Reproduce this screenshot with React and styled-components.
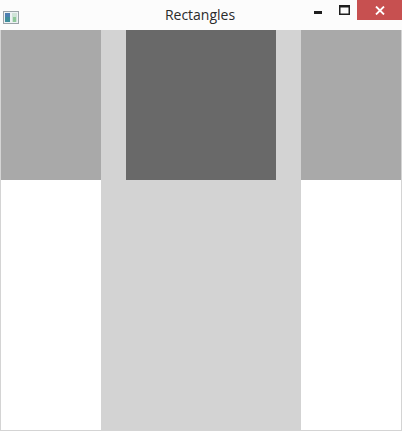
import React from 'react'
import styled, { createGlobalStyle } from 'styled-components'

const GlobalStyle = createGlobalStyle`
  html, body {
    margin: 0;
    padding: 0;
    background: #ffffff;
  }
`

const Window = styled.div`
  width: 402px;
  height: 431px;
  box-sizing: border-box;
  border: 1px solid #d4d4d4;
  border-top: none;
  display: flex;
  flex-direction: column;
  background: #ffffff;
`

const TitleBar = styled.div`
  height: 30px;
  margin: 0 -1px;
  display: flex;
  align-items: flex-start;
  background: #fcfcfc;
  font-family: 'Open Sans', 'Noto Sans', 'Liberation Sans', sans-serif;
`

const AppIcon = styled.div`
  margin: 7px 0 0 3px;
  width: 16px;
  height: 13px;
`

const Title = styled.div`
  flex: 1;
  text-align: center;
  font-size: 14px;
  line-height: 30px;
  color: #2b2b2b;
  padding-left: 76px;
`

const Controls = styled.div`
  display: flex;
  height: 20px;
`

const CtrlButton = styled.div`
  width: ${(p) => p.$w}px;
  height: 20px;
  display: flex;
  align-items: center;
  justify-content: center;
  background: ${(p) => p.$bg || 'transparent'};
`

const Content = styled.div`
  flex: 1;
  display: grid;
  grid-template-columns: 100px 200px 100px;
  grid-template-rows: 150px 250px;
`

const Cell = styled.div`
  background: ${(p) => p.$color};
  grid-column: ${(p) => p.$col};
  grid-row: ${(p) => p.$row || '1'};
  display: flex;
  justify-content: center;
`

const Inner = styled.div`
  width: 150px;
  height: 150px;
  background: #696969;
`

export default function App() {
  return (
    <>
      <GlobalStyle />
      <Window>
        <TitleBar>
          <AppIcon>
            <svg width="16" height="13" viewBox="0 0 16 13">
              <rect x="0.5" y="0.5" width="15" height="12" fill="#eef2f4" stroke="#9aa3a8" />
              <rect x="2" y="2" width="5" height="9" fill="#3f8d9b" />
              <rect x="2" y="2" width="5" height="4" fill="#4d7fb0" />
              <rect x="9" y="2" width="5" height="9" fill="#cfe3d8" />
              <rect x="10" y="6" width="3" height="5" fill="#8fc89a" />
            </svg>
          </AppIcon>
          <Title>Rectangles</Title>
          <Controls>
            <CtrlButton $w={26}>
              <svg width="10" height="10" viewBox="0 0 10 10">
                <rect x="1" y="6" width="8" height="3" fill="#1e1e1e" />
              </svg>
            </CtrlButton>
            <CtrlButton $w={26}>
              <svg width="11" height="10" viewBox="0 0 11 10">
                <rect x="0.75" y="0.75" width="9.5" height="8.5" fill="none" stroke="#1e1e1e" strokeWidth="1.5" />
                <rect x="0" y="0" width="11" height="2.5" fill="#1e1e1e" />
              </svg>
            </CtrlButton>
            <CtrlButton $w={45} $bg="#c75050">
              <svg width="10" height="9" viewBox="0 0 10 9">
                <path d="M1 0.5 L9 8.5 M9 0.5 L1 8.5" stroke="#ffffff" strokeWidth="1.8" />
              </svg>
            </CtrlButton>
          </Controls>
        </TitleBar>
        <Content>
          <Cell $color="#a9a9a9" $col="1" />
          <Cell $color="#d3d3d3" $col="2" $row="1 / span 2">
            <Inner />
          </Cell>
          <Cell $color="#a9a9a9" $col="3" />
        </Content>
      </Window>
    </>
  )
}
